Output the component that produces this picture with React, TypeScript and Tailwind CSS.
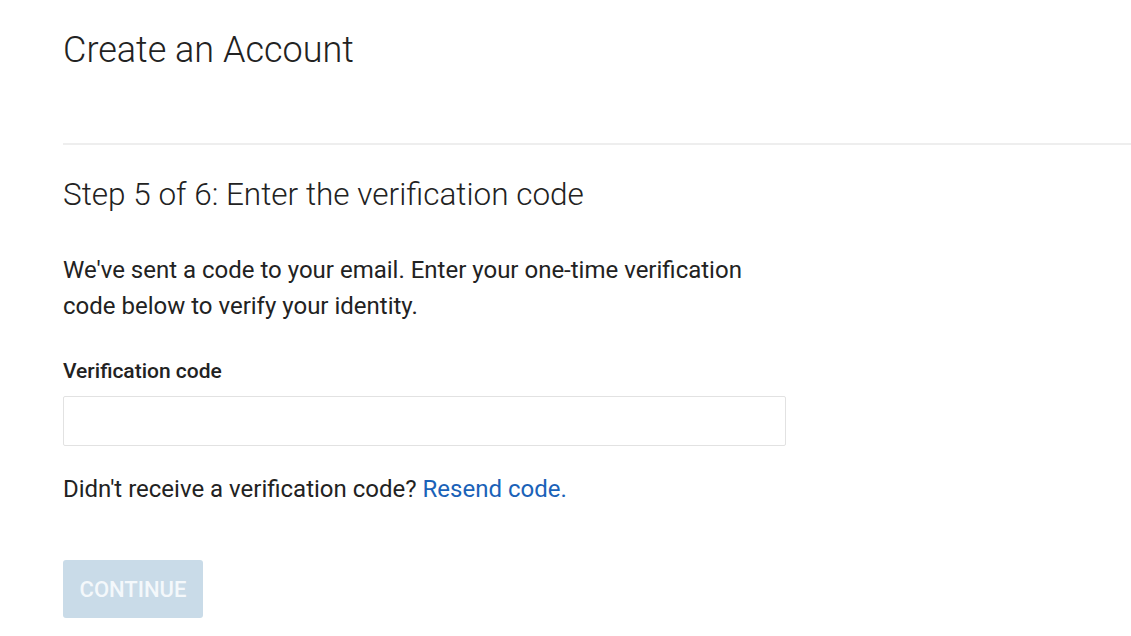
export default function App() {
  return (
    <div
      className="min-h-screen bg-white text-[#222222]"
      style={{ fontFamily: 'Roboto, "Liberation Sans", sans-serif' }}
    >
      <div className="pl-[63px] pt-[29px]">
        <h1 className="text-[36px] font-light leading-[42px] text-[#222222]">
          Create an Account
        </h1>
      </div>

      <div className="mt-[72px] ml-[63px] border-t-2 border-[#eeeeee]" />

      <div className="pl-[63px] pt-[32px]">
        <h2 className="text-[31.5px] font-light leading-[36px] text-[#222222]">
          Step 5 of 6: Enter the verification code
        </h2>

        <p className="mt-[39px] max-w-[720px] text-[24px] leading-[36px]">
          We've sent a code to your email. Enter your one-time verification
          code below to verify your identity.
        </p>

        <label
          htmlFor="code"
          className="mt-[35px] block text-[21px] font-medium leading-[24px]"
        >
          Verification code
        </label>
        <input
          id="code"
          type="text"
          className="mt-[13px] block h-[50px] w-[723px] rounded-[2px] border border-[#e2e2e2] bg-white px-3 text-[20px] outline-none"
        />

        <p className="mt-[25px] text-[24px] leading-[36px]">
          Didn't receive a verification code?{' '}
          <a href="#" className="text-[#1a62b8]">
            Resend code.
          </a>
        </p>

        <button
          type="button"
          disabled
          className="mt-[53px] h-[58px] w-[140px] rounded-[3px] bg-[#c9dbe8] pt-px text-[22px] font-medium text-[#f4f8fb]"
        >
          CONTINUE
        </button>
      </div>
    </div>
  )
}
